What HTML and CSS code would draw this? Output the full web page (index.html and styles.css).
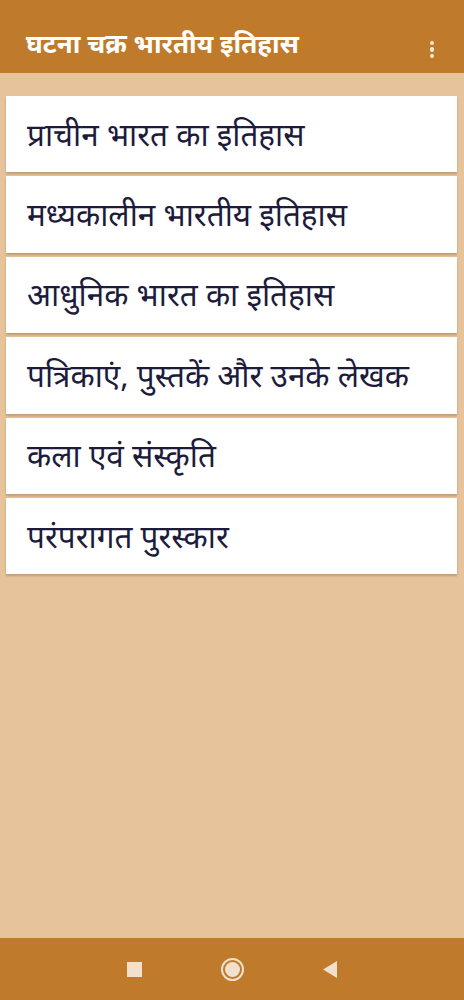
FILE: index.html
```html
<!DOCTYPE html>
<html lang="hi">
<head>
<meta charset="utf-8">
<link rel="stylesheet" href="styles.css">
</head>
<body>
<div class="screen">
  <header class="appbar">
    <h1 class="title">घटना चक्र भारतीय इतिहास</h1>
    <div class="menu"><span></span><span></span><span></span></div>
  </header>
  <main class="list">
    <div class="card">प्राचीन भारत का इतिहास</div>
    <div class="card">मध्यकालीन भारतीय इतिहास</div>
    <div class="card">आधुनिक भारत का इतिहास</div>
    <div class="card">पत्रिकाएं, पुस्तकें और उनके लेखक</div>
    <div class="card">कला एवं संस्कृति</div>
    <div class="card">परंपरागत पुरस्कार</div>
  </main>
  <nav class="navbar">
    <span class="nav-square"></span>
    <span class="nav-circle"><span></span></span>
    <svg class="nav-back" width="15" height="17" viewBox="0 0 15 17"><path d="M14 0 L14 17 L0 8.5 Z" fill="#f1e0cc"/></svg>
  </nav>
</div>
</body>
</html>
```
FILE: styles.css
```css
* { box-sizing: border-box; }
html, body { margin: 0; padding: 0; }
body {
  font-family: "Noto Sans", "Noto Sans Devanagari", "Lohit Devanagari", sans-serif;
  background: #e6c39a;
}
.screen {
  width: 464px;
  height: 1000px;
  display: flex;
  flex-direction: column;
  background: #e6c39a;
}
.appbar {
  height: 73px;
  flex: none;
  background: #bf7a2b;
  display: flex;
  align-items: center;
  justify-content: space-between;
  padding: 12px 30px 0 26px;
}
.title {
  margin: 0;
  color: #ffffff;
  font-size: 26px;
  font-weight: 700;
  line-height: 1;
}
.menu {
  display: flex;
  flex-direction: column;
  gap: 2px;
  padding-top: 14px;
}
.menu span {
  width: 4.5px;
  height: 4.5px;
  border-radius: 50%;
  background: #f7ead8;
}
.list {
  flex: 1;
  padding: 23px 7px 0 6px;
  display: flex;
  flex-direction: column;
  gap: 4px;
}
.card {
  height: 76.4px;
  flex: none;
  background: #ffffff;
  color: #1d1b3c;
  font-size: 31.5px;
  display: flex;
  align-items: center;
  padding-left: 21px;
  padding-bottom: 2px;
  box-shadow: 0 2px 2px rgba(120, 80, 40, 0.35);
}
.navbar {
  height: 62px;
  flex: none;
  background: #bf7a2b;
  display: flex;
  align-items: center;
  justify-content: center;
}
.nav-square {
  width: 15px;
  height: 15px;
  background: #f1e0cc;
  margin-right: 79px;
}
.nav-circle {
  width: 23px;
  height: 23px;
  border-radius: 50%;
  border: 2px solid #f1e0cc;
  display: flex;
  align-items: center;
  justify-content: center;
  margin-right: 79px;
}
.nav-circle span {
  width: 15px;
  height: 15px;
  border-radius: 50%;
  background: #f1e0cc;
}
.nav-back { display: block; }
```
